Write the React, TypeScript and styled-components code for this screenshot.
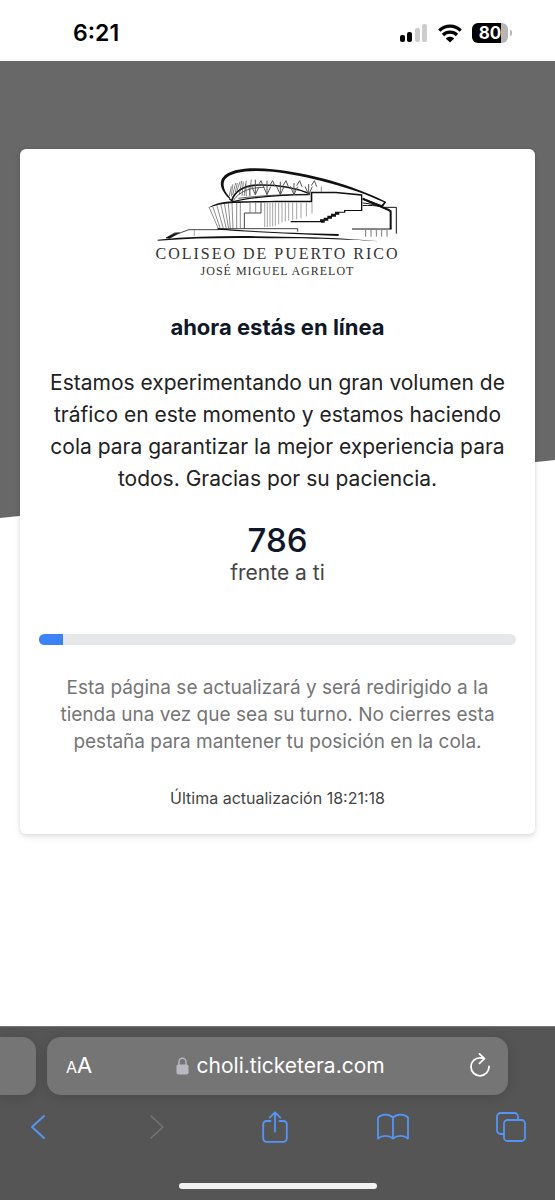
import React from "react";
import styled, { createGlobalStyle } from "styled-components";

const GlobalStyle = createGlobalStyle`
  *, *::before, *::after { box-sizing: border-box; }
  body {
    margin: 0;
    background: #fff;
    font-family: Inter, "Liberation Sans", sans-serif;
  }
  button, input { font: inherit; color: inherit; background: none; border: 0; padding: 0; margin: 0; }
`;

const Screen = styled.div`
  display: flex;
  flex-direction: column;
  min-height: 100vh;
`;

const StatusBar = styled.header`
  display: flex;
  align-items: center;
  justify-content: space-between;
  height: 61px;
  padding: 5px 43px 0 73px;
  color: #000;
`;

const Clock = styled.time`
  font-size: 23px;
  font-weight: 600;
`;

const StatusIcons = styled.div`
  display: flex;
  align-items: center;
  gap: 10px;
`;

const Battery = styled.div`
  display: flex;
  align-items: center;
  gap: 2px;
`;

const BatteryBody = styled.span`
  width: 36px;
  height: 20px;
  border-radius: 6px;
  background: linear-gradient(to right, #000 80%, #b5b5b5 80%);
  color: #fff;
  font-size: 17px;
  font-weight: 700;
  line-height: 20px;
  text-align: center;
`;

const BatteryTip = styled.span`
  width: 2px;
  height: 6px;
  border-radius: 0 2px 2px 0;
  background: #b5b5b5;
`;

const Page = styled.main`
  flex: 1;
  display: grid;
  align-items: start;
`;

const Backdrop = styled.div`
  grid-area: 1 / 1;
  height: 457px;
  background: #686868;
  clip-path: polygon(0 0, 100% 0, 100% calc(100% - 58px), 0 100%);
`;

const Card = styled.section`
  grid-area: 1 / 1;
  z-index: 1;
  display: flex;
  flex-direction: column;
  align-items: center;
  margin: 88px 20px 40px;
  padding: 18px 19px 24px;
  border-radius: 6px;
  background: #fff;
  box-shadow: 0 1px 4px rgba(0, 0, 0, 0.12), 0 4px 8px rgba(0, 0, 0, 0.06);
  text-align: center;
`;

const Logo = styled.figure`
  display: flex;
  flex-direction: column;
  align-items: center;
  margin: 0;
  font-family: "Liberation Serif", serif;
  color: #333;
  white-space: nowrap;
`;

const LogoName = styled.span`
  margin-top: 3px;
  font-size: 16px;
  line-height: 18px;
  letter-spacing: 2px;
`;

const LogoSubname = styled.span`
  font-size: 12px;
  line-height: 16px;
  letter-spacing: 1px;
`;

const Title = styled.h1`
  margin: 34px 0 0;
  color: #0f172a;
  font-size: 22px;
  font-weight: 700;
  line-height: 28px;
`;

const Message = styled.p`
  margin: 26px 0 0;
  color: #222;
  font-size: 21px;
  line-height: 32px;
`;

const Position = styled.p`
  display: flex;
  flex-direction: column;
  margin: 26px 0 0;
  color: #444;
  font-size: 21px;
  line-height: 28px;
`;

const PositionCount = styled.strong`
  color: #0f172a;
  font-size: 33px;
  font-weight: 500;
  line-height: 38px;
`;

const Progress = styled.progress`
  appearance: none;
  display: block;
  width: 100%;
  height: 11px;
  margin: 47px 0 0;
  border: 0;
  border-radius: 6px;
  overflow: hidden;
  background: #e5e7eb;
  &::-webkit-progress-bar { background: #e5e7eb; }
  &::-webkit-progress-value { background: #3b82f6; }
  &::-moz-progress-bar { background: #3b82f6; }
`;

const Note = styled.p`
  margin: 29px 0 0;
  color: #757575;
  font-size: 19px;
  line-height: 27px;
`;

const Updated = styled.p`
  margin: 31px 0 0;
  color: #444;
  font-size: 16px;
  line-height: 24px;
`;

const BrowserBar = styled.footer`
  padding: 10px 0 11px;
  border-top: 1px solid #777;
  background: #555;
`;

const TabStrip = styled.div`
  display: flex;
  gap: 11px;
  height: 58px;
  padding-right: 47px;
`;

const PreviousTab = styled.button`
  width: 36px;
  border-radius: 0 14px 14px 0;
  background: #757575;
  box-shadow: 0 2px 12px rgba(0, 0, 0, 0.14);
`;

const AddressBar = styled.div`
  flex: 1;
  display: flex;
  align-items: center;
  justify-content: space-between;
  padding: 0 16px 0 19px;
  border-radius: 14px;
  background: #757575;
  box-shadow: 0 2px 12px rgba(0, 0, 0, 0.14);
  color: #fff;
`;

const TextSizeButton = styled.button`
  display: flex;
  align-items: baseline;
  font-size: 22px;
  line-height: 28px;
`;

const SmallLetter = styled.span`
  font-size: 16px;
`;

const Address = styled.label`
  display: flex;
  align-items: center;
  gap: 8px;
`;

const AddressInput = styled.input`
  field-sizing: content;
  font-size: 21px;
  line-height: 28px;
`;

const IconButton = styled.button`
  display: flex;
  align-items: center;
  justify-content: center;
  width: 32px;
  height: 40px;
  color: #5495f5;
  &:disabled { color: #757575; }
`;

const ReloadButton = styled(IconButton)`
  width: 24px;
  color: #fff;
`;

const Toolbar = styled.nav`
  display: flex;
  justify-content: space-between;
  margin-top: 12px;
  padding: 0 28px 0 22px;
`;

const HomeIndicator = styled.div`
  width: 198px;
  height: 6px;
  margin: 36px auto 0;
  border-radius: 3px;
  background: #f2f2f2;
`;

const trusses = [318, 353, 393, 434, 478];
const facadeLines = [346, 354, 362, 370, 378, 388, 398, 408, 418, 430, 442, 455, 471, 488];
const facadeEnds = [230, 230, 229, 228, 226, 222, 216, 213, 211, 210, 207, 204, 198, 190];

/** Line drawing of the arena above its name. */
const ArenaDrawing = () => (
  <svg width="243" height="75" viewBox="20 50 729 225" fill="none" stroke="#111" aria-hidden="true">
    <path fill="#111" stroke="none" d="M240 145C218 124 207 100 220 82C240 53 310 50 370 57C480 68 610 104 711 155L700 170L684 166L641 149L640 143L686 160L697 164L704 156C610 111 470 76 370 64C300 58 246 64 228 86C217 101 224 123 243 143Z" />
    <path strokeWidth="5" d="M247 151C257 121 284 105 330 104C384 103 440 113 482 130" />
    <path strokeWidth="2" d="M252 151C270 122 305 111 345 111M267 144C330 136 400 132 482 132" />
    <path strokeWidth="4" d="M240 145L251 154C310 139 400 134 480 133" />
    <path strokeWidth="2" stroke="#444" d="M240 137L246 108M246 138L250 102M250 134L259 98M258 126L264 98M263 121L272 94M270 133L277 92M278 136L282 94M284 137L291 91M291 138L289 100M300 136L306 88M298 107L303 136" />
    {trusses.map((x) => (
      <path
        key={x}
        strokeWidth="3"
        stroke="#555"
        d={`M${x} ${Math.round(88 + (x - 318) / 12)}V133M${x - 11} 108L${x} 133L${x + 11} 109M${x + 8} 106L${x + 17} 91L${x + 24} 109`}
      />
    ))}
    <path strokeWidth="2" stroke="#555" d="M516 109V124" />
    <path fill="#111" stroke="none" d="M175 174C195 158 225 153 270 153C340 151 420 151 484 151V124H560L639 132V182H588V187H570V193H560V199H548V205H537V211H526V217H515V216H424V212H512V207H523V202H534V196H545V190H557V184H584V179H635V136L560 129H489V156C400 155 320 156 270 158C230 158 200 163 175 174Z" />
    <path strokeWidth="2" stroke="#555" d="M180 172L207 235M190 168L213 235M202 163L222 235M214 160L231 235M225 159L238 235M237 158L243 235M248 158L251 235M262 157V235M273 157V233M319 157V187M302 157V187" />
    <path strokeWidth="3" stroke="#444" d="M285 235V188H335V157" />
    {facadeLines.map((x, i) => (
      <path key={x} strokeWidth="2" stroke="#777" d={`M${x} 157V${facadeEnds[i]}`} />
    ))}
    <path strokeWidth="3" d="M640 158C665 160 690 166 719 179M640 166C660 164 680 166 697 169" />
    <path strokeWidth="6" d="M640 145L718 179L724 183V237" />
    <path strokeWidth="3" d="M703 171H741V250M608 236H726" />
    <path strokeWidth="3" stroke="#777" d="M649 238V259M665 238V259M681 238V259M697 238V259M713 238V259" />
    <path strokeWidth="3" stroke="#444" d="M50 263L76 248L94 247L119 238H210M205 235H445V244" />
    <path strokeWidth="2" stroke="#777" d="M135 239V258" />
    <path fill="#111" stroke="none" d="M205 234C300 243 430 248 568 251V257C430 251 300 245 205 238Z" />
    <path fill="#111" stroke="none" d="M25 268C150 256 280 256 400 259C520 260 620 266 690 273C620 268 500 265 400 264C270 262 150 261 25 271Z" />
    <path fill="#111" stroke="none" d="M48 263L77 249L94 248L82 253L60 265Z" />
  </svg>
);

const SignalIcon = () => (
  <svg width="28" height="18" viewBox="0 0 28 18" aria-hidden="true">
    <rect x="0" y="11" width="5" height="7" rx="2" fill="#000" />
    <rect x="7" y="8" width="5" height="10" rx="2" fill="#000" />
    <rect x="15" y="4" width="5" height="14" rx="2" fill="#ccc" />
    <rect x="22" y="0" width="5" height="18" rx="2" fill="#ccc" />
  </svg>
);

const WifiIcon = () => (
  <svg width="24" height="19" viewBox="0 0 24 19" fill="none" stroke="#000" strokeWidth="3.2" aria-hidden="true">
    <path d="M1.3 6.6C7.3 .6 16.7 .6 22.7 6.6" />
    <path d="M5 11C9 7.2 15 7.2 19 11" />
    <path d="M7.8 14.4C10.3 12.2 13.7 12.2 16.2 14.4L12 18.5Z" fill="#000" stroke="none" />
  </svg>
);

const LockIcon = () => (
  <svg width="13" height="18" viewBox="0 0 13 18" aria-hidden="true">
    <rect x="0.5" y="7.5" width="12" height="10" rx="1.8" fill="#b9b8c0" />
    <path d="M3 8V4.7a3.5 3.5 0 0 1 7 0V8" fill="none" stroke="#b9b8c0" strokeWidth="1.5" />
  </svg>
);

const ReloadIcon = () => (
  <svg width="22" height="26" viewBox="0 0 22 26" fill="none" stroke="currentColor" strokeWidth="1.8" strokeLinecap="round" strokeLinejoin="round" aria-hidden="true">
    <path d="M20 13.5A9 9 0 1 1 11 4.8C12.4 4.8 13.7 5 15 5.5M10.5 .9L15.5 5.6L10.5 10.4" />
  </svg>
);

const BackIcon = () => (
  <svg width="16" height="26" viewBox="0 0 16 26" fill="none" stroke="currentColor" strokeWidth="2" strokeLinecap="round" strokeLinejoin="round" aria-hidden="true">
    <path d="M14 2L2 13L14 24" />
  </svg>
);

const ForwardIcon = () => (
  <svg width="16" height="26" viewBox="0 0 16 26" fill="none" stroke="currentColor" strokeWidth="1.6" strokeLinecap="round" strokeLinejoin="round" aria-hidden="true">
    <path d="M3 2L15 13L3 24" />
  </svg>
);

const ShareIcon = () => (
  <svg width="26" height="32" viewBox="0 0 26 32" fill="none" stroke="currentColor" strokeWidth="1.8" strokeLinecap="round" strokeLinejoin="round" aria-hidden="true">
    <path d="M8.5 10H4.5A3.3 3.3 0 0 0 1.2 13.3V27.5A3.3 3.3 0 0 0 4.5 30.8H21.5A3.3 3.3 0 0 0 24.8 27.5V13.3A3.3 3.3 0 0 0 21.5 10H17.5M13 20.5V1.5M7.7 6.6L13 1.3L18.3 6.6" />
  </svg>
);

const BookIcon = () => (
  <svg width="32" height="28" viewBox="0 0 32 28" fill="none" stroke="currentColor" strokeWidth="1.8" strokeLinecap="round" strokeLinejoin="round" aria-hidden="true">
    <path d="M16 4.5V25.5M16 4.5C12 .6 5 .6 1 4.5V25.5C5 22 12 22 16 25.5C20 22 27 22 31 25.5V4.5C27 .6 20 .6 16 4.5" />
  </svg>
);

const TabsIcon = () => (
  <svg width="30" height="30" viewBox="0 0 30 30" fill="none" stroke="currentColor" strokeWidth="1.8" aria-hidden="true">
    <rect x="8" y="8" width="21" height="21" rx="3.5" />
    <path d="M8 22H4.5A3.5 3.5 0 0 1 1 18.5V4.5A3.5 3.5 0 0 1 4.5 1H18.5A3.5 3.5 0 0 1 22 4.5V8" />
  </svg>
);

export default function App() {
  return (
    <Screen>
      <GlobalStyle />
      <StatusBar>
        <Clock>6:21</Clock>
        <StatusIcons>
          <SignalIcon />
          <WifiIcon />
          <Battery>
            <BatteryBody>80</BatteryBody>
            <BatteryTip />
          </Battery>
        </StatusIcons>
      </StatusBar>
      <Page>
        <Backdrop />
        <Card>
          <Logo>
            <ArenaDrawing />
            <LogoName>COLISEO DE PUERTO RICO</LogoName>
            <LogoSubname>JOSÉ MIGUEL AGRELOT</LogoSubname>
          </Logo>
          <Title>ahora estás en línea</Title>
          <Message>
            Estamos experimentando un gran volumen de tráfico en este momento y estamos haciendo
            cola para garantizar la mejor experiencia para todos. Gracias por su paciencia.
          </Message>
          <Position>
            <PositionCount>786</PositionCount>
            <span>frente a ti</span>
          </Position>
          <Progress value={5} max={100} aria-label="Progreso en la cola" />
          <Note>
            Esta página se actualizará y será redirigido a la tienda una vez que sea su turno. No
            cierres esta pestaña para mantener tu posición en la cola.
          </Note>
          <Updated>Última actualización 18:21:18</Updated>
        </Card>
      </Page>
      <BrowserBar>
        <TabStrip>
          <PreviousTab aria-label="Pestaña anterior" />
          <AddressBar>
            <TextSizeButton aria-label="Tamaño del texto">
              <SmallLetter>A</SmallLetter>A
            </TextSizeButton>
            <Address>
              <LockIcon />
              <AddressInput type="text" aria-label="Dirección" defaultValue="choli.ticketera.com" />
            </Address>
            <ReloadButton aria-label="Recargar">
              <ReloadIcon />
            </ReloadButton>
          </AddressBar>
        </TabStrip>
        <Toolbar>
          <IconButton aria-label="Atrás"><BackIcon /></IconButton>
          <IconButton aria-label="Adelante" disabled><ForwardIcon /></IconButton>
          <IconButton aria-label="Compartir"><ShareIcon /></IconButton>
          <IconButton aria-label="Marcadores"><BookIcon /></IconButton>
          <IconButton aria-label="Pestañas"><TabsIcon /></IconButton>
        </Toolbar>
        <HomeIndicator />
      </BrowserBar>
    </Screen>
  );
}
